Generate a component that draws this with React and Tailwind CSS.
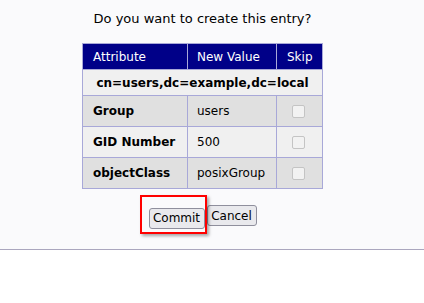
import React from "react";

const font = { fontFamily: '"DejaVu Sans", Verdana, sans-serif' };

function Check() {
  return (
    <div className="w-[13px] h-[13px] rounded-[2px] border border-[#c4c4c4] bg-[#f2f2f2]" />
  );
}

function Row({ label, value, bg }) {
  return (
    <div className={`flex h-[31px] ${bg}`}>
      <div className="w-[105px] border-r border-b border-[#a8a8d8] flex items-center pl-[10px] font-bold text-[12px] text-black">
        {label}
      </div>
      <div className="w-[89px] border-r border-b border-[#a8a8d8] flex items-center pl-[9px] text-[12px] text-black">
        {value}
      </div>
      <div className="w-[46px] border-r border-b border-[#a8a8d8] flex items-center justify-center pr-[2px]">
        <Check />
      </div>
    </div>
  );
}

export default function App() {
  return (
    <div className="w-[424px] h-[303px] bg-white" style={font}>
      <div className="h-[249px] bg-[#fafafc] border-b border-[#aaa6be] box-content">
        <div className="w-[405px] flex flex-col items-center">
          <div className="pt-[11px] h-[43px] text-[13px] text-black leading-[16px]">
            Do you want to create this entry?
          </div>
          <div className="w-[241px] border-l border-t border-[#a8a8d8]">
            <div className="flex h-[26px] bg-[#000088] text-white text-[12px]">
              <div className="w-[105px] border-r border-b border-[#a8a8d8] flex items-center pl-[10px]">
                Attribute
              </div>
              <div className="w-[89px] border-r border-b border-[#a8a8d8] flex items-center pl-[9px]">
                New Value
              </div>
              <div className="w-[46px] border-r border-b border-[#a8a8d8] flex items-center pl-[10px]">
                Skip
              </div>
            </div>
            <div className="h-[26px] bg-[#f0f0f0] border-r border-b border-[#a8a8d8] flex items-center justify-center font-bold text-[12px] text-black">
              cn=users,dc=example,dc=local
            </div>
            <Row label="Group" value="users" bg="bg-[#e0e0e0]" />
            <Row label="GID Number" value="500" bg="bg-[#f0f0f0]" />
            <Row label="objectClass" value="posixGroup" bg="bg-[#e0e0e0]" />
          </div>
          <div className="mt-[16px] flex gap-[2px]">
            <div className="relative">
              <button className="h-[21px] w-[56px] border border-[#8f8f9d] rounded-[3px] bg-[#e9e9ed] text-[12px] text-black leading-none" style={font}>
                Commit
              </button>
              <div className="absolute left-[-9px] top-[-10px] w-[67px] h-[39px] border-2 border-[#ff0000] shadow-[2px_2px_3px_rgba(0,0,0,0.35)] pointer-events-none" />
            </div>
            <button className="h-[21px] w-[50px] border border-[#8f8f9d] rounded-[3px] bg-[#e9e9ed] text-[12px] text-black leading-none" style={font}>
              Cancel
            </button>
          </div>
        </div>
      </div>
    </div>
  );
}
